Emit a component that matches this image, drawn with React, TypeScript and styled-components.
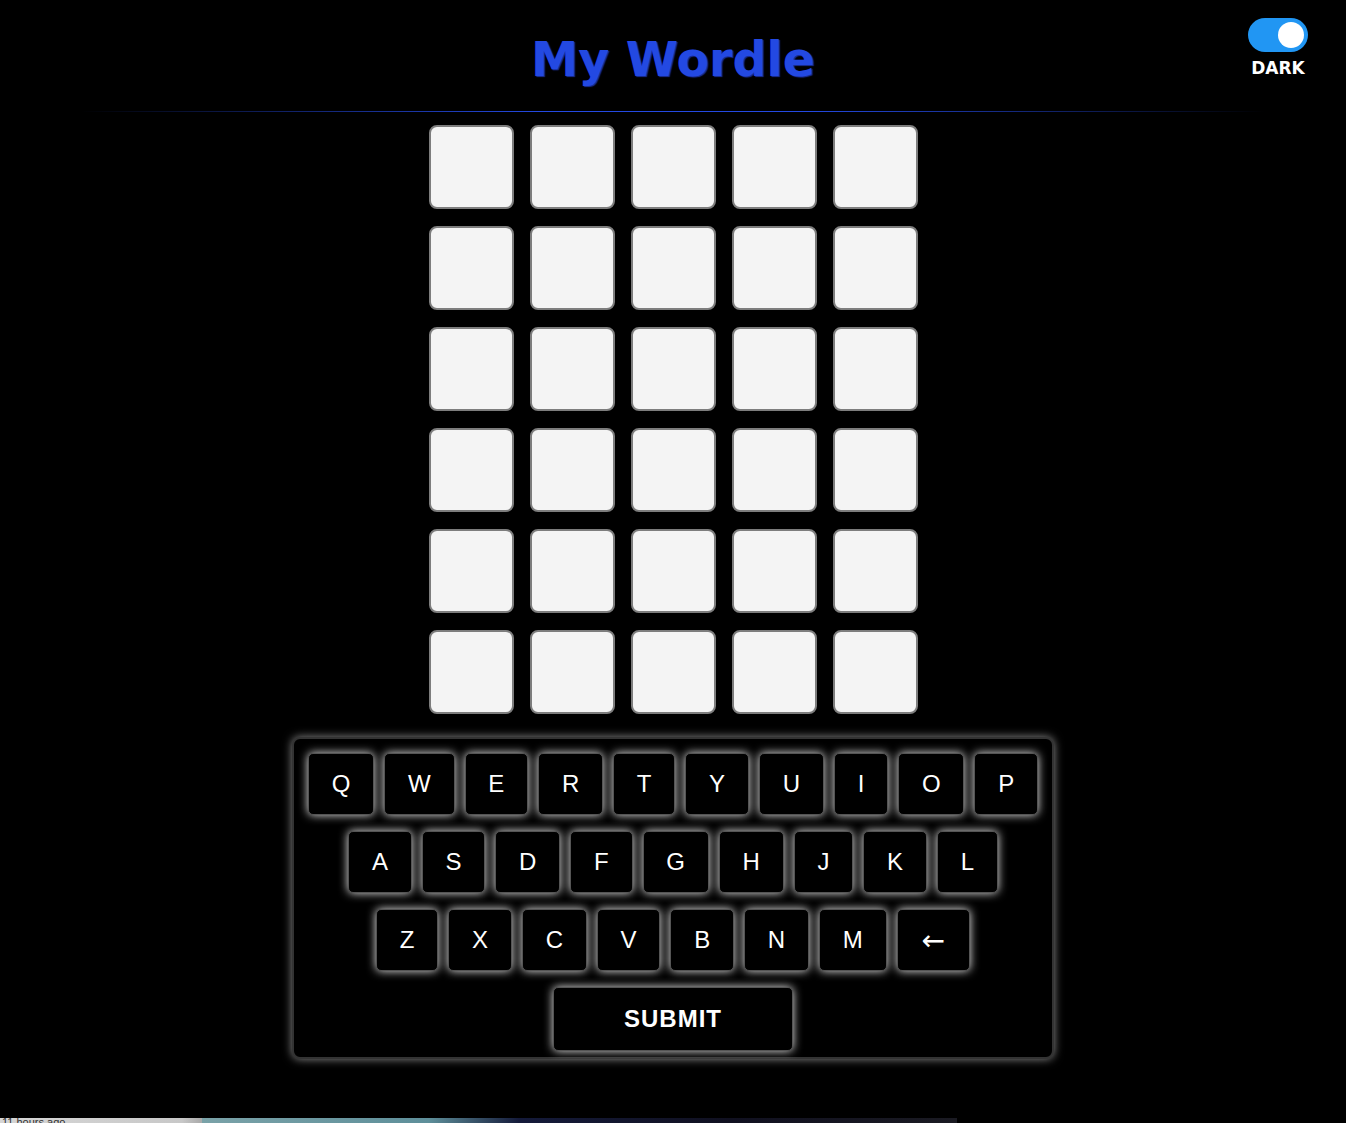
import React from "react";
import styled, { createGlobalStyle } from "styled-components";

const GlobalStyle = createGlobalStyle`
  html, body {
    margin: 0;
    padding: 0;
    background: #000;
  }
  body {
    font-family: "Liberation Sans", Arial, sans-serif;
    color: #fff;
    overflow: hidden;
  }
`;

const Page = styled.div`
  min-height: 1123px;
  display: flex;
  flex-direction: column;
  background: #000;
`;

const Header = styled.header`
  display: grid;
  grid-template-columns: 1fr auto 1fr;
  align-items: start;
  height: 111px;
  padding: 0 38px 0 38px;
`;

const Title = styled.h1`
  grid-column: 2;
  margin: 32px 0 0;
  font-family: "DejaVu Sans", Verdana, sans-serif;
  font-weight: bold;
  font-size: 47.5px;
  line-height: 56px;
  color: #2349e2;
  text-shadow: 1px 1px 1px #1a2f9a;
`;

const ThemeToggle = styled.label`
  grid-column: 3;
  justify-self: end;
  display: flex;
  flex-direction: column;
  align-items: center;
  gap: 7px;
  margin-top: 18px;
  cursor: pointer;
`;

const Switch = styled.span<{ $on: boolean }>`
  display: flex;
  align-items: center;
  justify-content: ${(p) => (p.$on ? "flex-end" : "flex-start")};
  width: 60px;
  height: 34px;
  box-sizing: border-box;
  padding: 0 4px;
  border-radius: 34px;
  background: ${(p) => (p.$on ? "#2196f3" : "#ccc")};
`;

const Knob = styled.span`
  width: 26px;
  height: 26px;
  border-radius: 50%;
  background: #fff;
`;

const ToggleLabel = styled.span`
  font-family: "DejaVu Sans", Verdana, sans-serif;
  font-weight: bold;
  font-size: 17px;
  line-height: 18px;
  color: #fff;
`;

const Divider = styled.div`
  height: 1px;
  background: linear-gradient(to right, rgba(35, 73, 226, 0) 6%, #2349e2 40%, #2349e2 60%, rgba(35, 73, 226, 0) 94%);
`;

const Main = styled.main`
  display: flex;
  flex-direction: column;
  align-items: center;
  padding-top: 13px;
`;

const Board = styled.div`
  display: grid;
  grid-template-columns: repeat(5, 85px);
  grid-auto-rows: 84px;
  column-gap: 16px;
  row-gap: 17px;
`;

const Tile = styled.div`
  box-sizing: border-box;
  border: 2px solid #7d7d7d;
  border-radius: 8px;
  background: #f4f4f4;
`;

const Keyboard = styled.div`
  margin-top: 23px;
  display: flex;
  flex-direction: column;
  align-items: center;
  gap: 16px;
  padding: 14px 14px 6px;
  border: 2px solid #333;
  border-radius: 8px;
  background: #000;
  box-shadow: 0 0 10px rgba(255, 255, 255, 0.55);
`;

const KeyRow = styled.div`
  display: flex;
  gap: 10px;
`;

const Key = styled.button<{ $wide?: boolean; $symbol?: boolean }>`
  box-sizing: border-box;
  height: ${(p) => (p.$wide ? "64px" : "62px")};
  min-width: ${(p) => (p.$wide ? "240px" : "0")};
  padding: 0 ${(p) => (p.$symbol ? "24px" : "22.8px")};
  border: 1px solid #555;
  border-radius: 5px;
  background: #000;
  color: #fff;
  font-family: ${(p) => (p.$symbol ? '"DejaVu Sans", sans-serif' : '"Liberation Sans", Arial, sans-serif')};
  font-size: ${(p) => (p.$symbol ? "28px" : "24px")};
  font-weight: ${(p) => (p.$wide ? "bold" : "normal")};
  letter-spacing: ${(p) => (p.$wide ? "1px" : "0")};
  box-shadow: 0 0 10px rgba(255, 255, 255, 0.9);
  display: flex;
  align-items: center;
  justify-content: center;
  cursor: pointer;
`;

const Footer = styled.footer`
  margin-top: auto;
  display: flex;
  height: 5px;
  overflow: hidden;
`;

const FooterThumb = styled.div`
  width: 200px;
  background: linear-gradient(to right, #d6d6d6, #c8c8c8 90%, #a9a9a9);
  color: #333;
  font-size: 11px;
  line-height: 9px;
  padding-left: 2px;
  white-space: nowrap;
`;

const FooterImage = styled.div`
  width: 755px;
  background: linear-gradient(to right, #7aa2a8 0%, #5e8f9a 30%, #141a3a 42%, #101020 70%, #1a1a22 100%);
`;

const rows = [
  ["Q", "W", "E", "R", "T", "Y", "U", "I", "O", "P"],
  ["A", "S", "D", "F", "G", "H", "J", "K", "L"],
  ["Z", "X", "C", "V", "B", "N", "M", "←"],
];

export default function App() {
  return (
    <Page>
      <GlobalStyle />
      <Header>
        <Title>My Wordle</Title>
        <ThemeToggle>
          <Switch $on>
            <Knob />
          </Switch>
          <ToggleLabel>DARK</ToggleLabel>
        </ThemeToggle>
      </Header>
      <Divider />
      <Main>
        <Board>
          {Array.from({ length: 30 }).map((_, i) => (
            <Tile key={i} />
          ))}
        </Board>
        <Keyboard>
          {rows.map((r, i) => (
            <KeyRow key={i}>
              {r.map((k) => (
                <Key key={k} $symbol={k === "←"}>
                  {k}
                </Key>
              ))}
            </KeyRow>
          ))}
          <KeyRow>
            <Key $wide>SUBMIT</Key>
          </KeyRow>
        </Keyboard>
      </Main>
      <Footer>
        <FooterThumb>11 hours ago</FooterThumb>
        <FooterImage />
      </Footer>
    </Page>
  );
}
